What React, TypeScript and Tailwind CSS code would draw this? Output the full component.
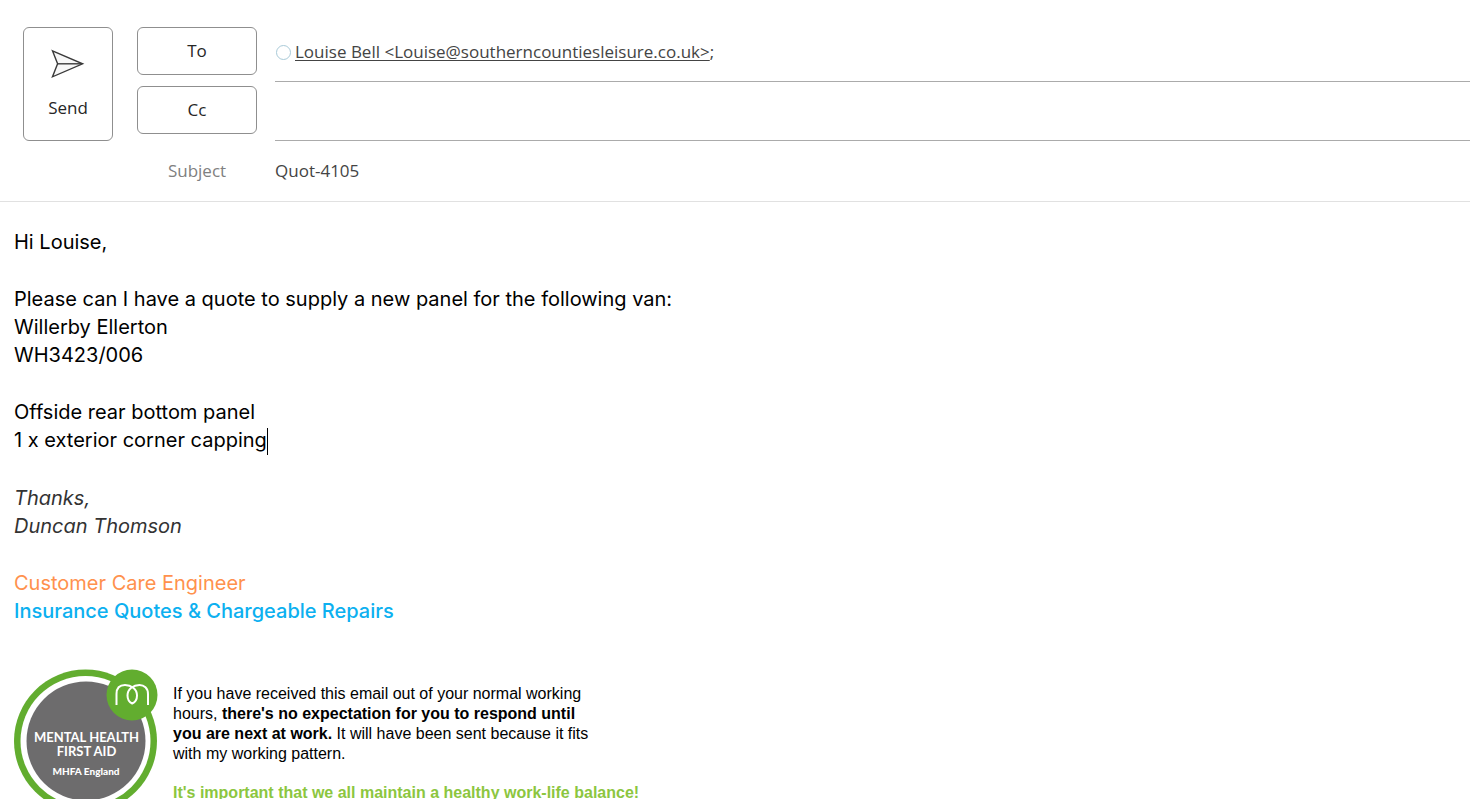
const SendIcon = () => (
  <svg width="36" height="30" viewBox="0 0 36 30" fill="#f7f7f7" stroke="#3a3a3a" strokeWidth="1.4">
    <path d="M2.5 1.8 L32.6 14.8 L2.5 27.8 L7.6 14.8 Z" strokeLinejoin="miter" />
    <path d="M7.6 14.8 H31" />
  </svg>
);

const MhfaLogo = () => (
  <svg width="144" height="144" viewBox="0 0 144 144" className="shrink-0" role="img">
    <circle cx="71.5" cy="72" r="71.5" fill="#62ad2f" />
    <circle cx="71.5" cy="72" r="65" fill="#fff" />
    <circle cx="72" cy="72" r="59.5" fill="#6d6c6d" />
    <circle cx="118" cy="26" r="25.5" fill="#62ad2f" />
    <g fill="none" stroke="#fff" strokeWidth="2">
      <path d="M102.5 36 V25 C102.5 18 107 16 111 16 C117 16 123 20 123 26.5 C123 31 120.500 33.500 118.200 34.500 C116 33.500 113.500 31 113.500 26.500 C113.500 20 119.500 16 125.500 16 C130 16 134 19 134 25 V36" />
    </g>
    <g fill="#fff" textAnchor="middle" fontFamily="Lato, sans-serif" fontWeight="700">
      <text x="72.500" y="73" fontSize="13">MENTAL HEALTH</text>
      <text x="72.500" y="87" fontSize="13">FIRST AID</text>
      <text x="72" y="106" fontSize="10" fontWeight="900">MHFA England</text>
    </g>
  </svg>
);

const Header = () => {
  const button =
    "rounded-md border border-[#8f8f8f] bg-white text-[#262626] hover:bg-gray-50";
  return (
    <header className="flex items-start gap-6 border-b border-[#e1e1e1] pl-[23px] pt-[27px] font-['Open_Sans','Noto_Sans',sans-serif] text-[17px] text-[#444]">
      <button
        type="button"
        className={`${button} flex h-[114px] w-[90px] shrink-0 flex-col items-center justify-center gap-4 pt-0.5`}
      >
        <SendIcon />
        <span>Send</span>
      </button>
      <div className="min-w-0 flex-1">
        <div className="flex h-[55px] items-start gap-[18px]">
          <button type="button" className={`${button} h-12 w-[120px] shrink-0`}>
            To
          </button>
          <div className="flex h-full min-w-0 flex-1 items-center border-b border-[#ababab] pb-1">
            <span className="ml-px mr-1 size-[15px] shrink-0 rounded-full border border-[#a9cad8]" />
            <a
              href="mailto:Louise@southerncountiesleisure.co.uk"
              className="underline underline-offset-2"
            >
              Louise Bell &lt;Louise@southerncountiesleisure.co.uk&gt;
            </a>
            ;
            <input aria-label="To" className="h-full min-w-0 flex-1 outline-none" />
          </div>
        </div>
        <div className="flex h-[59px] items-start gap-[18px]">
          <button type="button" className={`${button} mt-1 h-12 w-[120px] shrink-0`}>
            Cc
          </button>
          <input
            aria-label="Cc"
            className="h-full min-w-0 flex-1 border-b border-[#ababab] outline-none"
          />
        </div>
        <div className="flex h-[60px] items-center gap-[18px]">
          <label htmlFor="subject" className="w-[120px] shrink-0 text-center text-[#808080]">
            Subject
          </label>
          <input
            id="subject"
            defaultValue="Quot-4105"
            className="min-w-0 flex-1 outline-none"
          />
        </div>
      </div>
    </header>
  );
};

const Message = () => {
  return (
    <main className="px-3.5 pt-[26px] text-black">
      <div className="flex flex-col gap-[29px] font-[Inter,sans-serif] text-[20px] leading-7">
        <p>Hi Louise,</p>
        <p>
          Please can I have a quote to supply a new panel for the following van:
          <br />
          Willerby Ellerton
          <br />
          WH3423/006
        </p>
        <p>
          Offside rear bottom panel
          <br />
          1 x exterior corner capping
          <span className="inline-block h-[27px] w-px bg-black align-middle" />
        </p>
        <p className="italic text-[#333]">
          Thanks,
          <br />
          Duncan Thomson
        </p>
        <p className="text-[#ff914d]">
          Customer Care Engineer
          <br />
          <span className="font-medium text-[#0cb0f0]">
            Insurance Quotes &amp; Chargeable Repairs
          </span>
        </p>
      </div>
      <div className="mt-11 flex items-start gap-[15px] font-['Liberation_Sans',Arial,sans-serif] text-base leading-5">
        <MhfaLogo />
        <div className="flex flex-col gap-[19px] pt-[15px]">
          <p className="max-w-[430px]">
            If you have received this email out of your normal working hours,{" "}
            <b>there's no expectation for you to respond until you are next at work.</b> It
            will have been sent because it fits with my working pattern.
          </p>
          <p className="font-bold text-[#8cc63f]">
            It's important that we all maintain a healthy work-life balance!
          </p>
        </div>
      </div>
    </main>
  );
};

export default function App() {
  return (
    <div className="h-screen overflow-hidden bg-white">
      <Header />
      <Message />
    </div>
  );
}
